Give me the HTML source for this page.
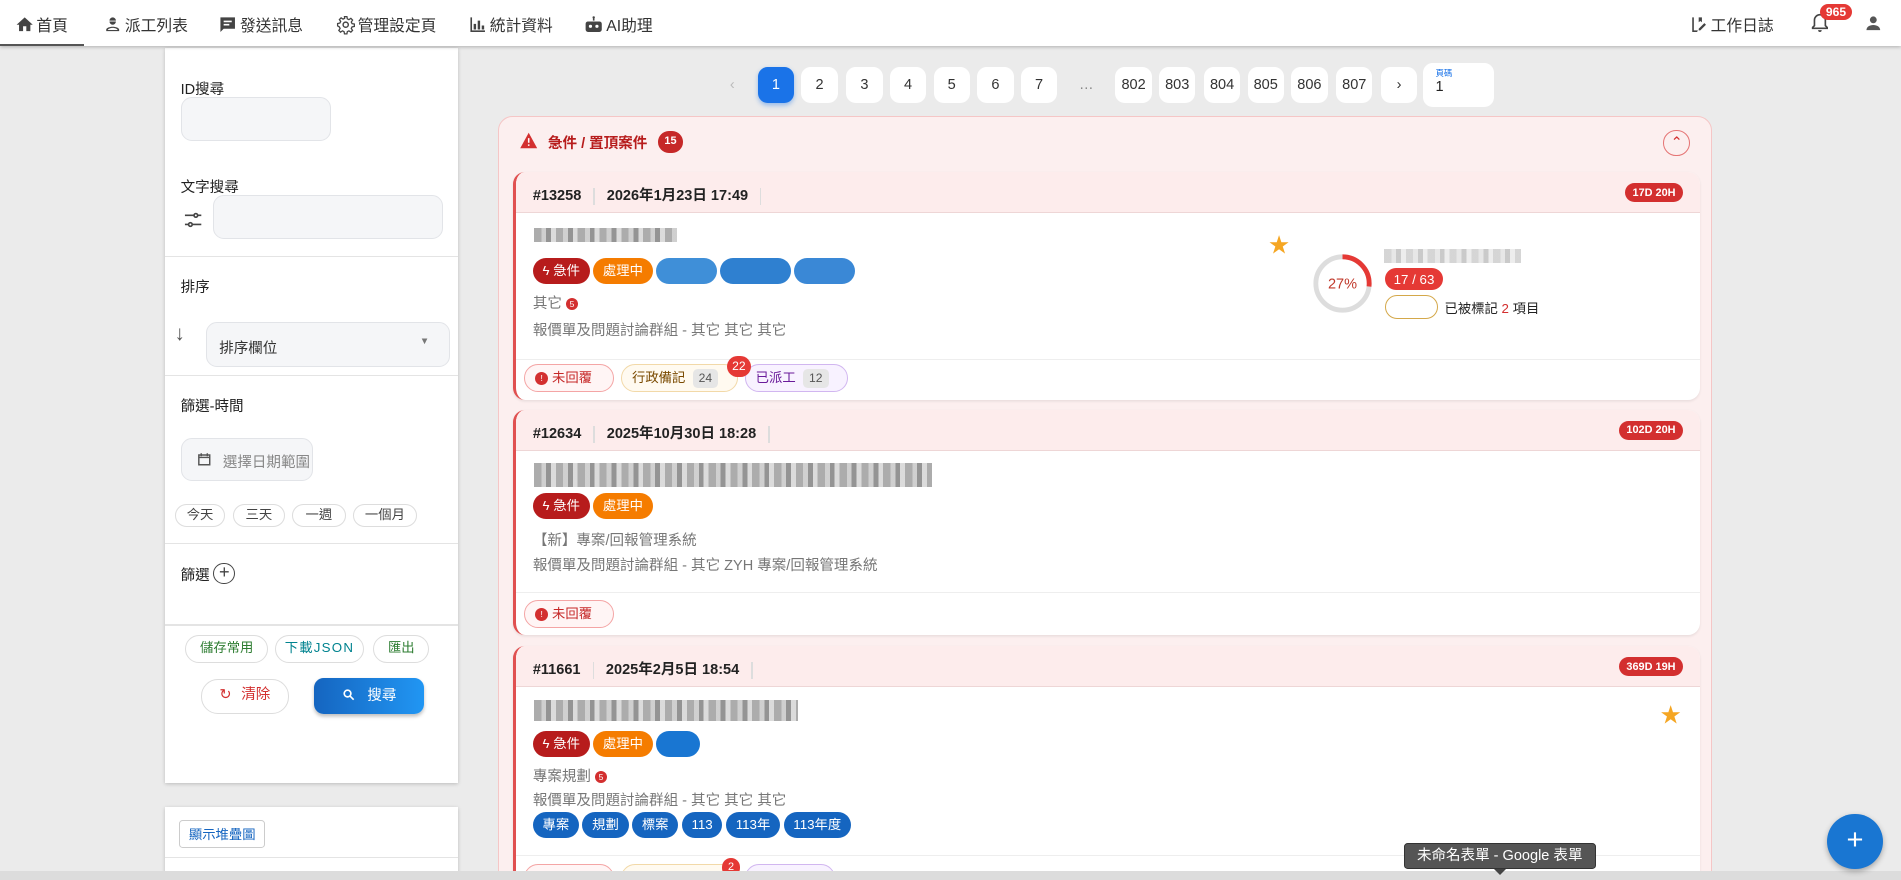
<!DOCTYPE html>
<html><head><meta charset="utf-8">
<style>
*{box-sizing:border-box;margin:0;padding:0}
html,body{width:1901px;height:880px;overflow:hidden;background:#ebebeb}
#w{zoom:1.2124;width:1568px;height:726px;position:relative;font-family:"Liberation Sans","Noto Sans CJK TC",sans-serif;color:#222;font-size:12px;overflow:hidden}
.a{position:absolute}
.top{left:0;top:0;width:1568px;height:38px;background:#fff;box-shadow:0 1px 3px rgba(0,0,0,.25);z-index:5}
.nav{top:11px;font-size:13px;color:#333;display:flex;align-items:center;gap:2px}
.nav svg{width:16px;height:16px;fill:#444}
.panel{background:#fff;box-shadow:0 1px 3px rgba(0,0,0,.2)}
.lbl{font-size:12px;color:#222}
.inp{background:#f5f6f8;border:1px solid #e2e4e8;border-radius:9px}
.hr{height:1px;background:#e4e4e4;left:0;width:242px}
.chip{border:1.5px solid #ddd;border-radius:12px;font-size:11px;text-align:center;height:19px;line-height:16px;color:#444}
.pg{width:30px;height:30px;background:#fff;border-radius:8px;text-align:center;line-height:30px;font-size:12px;top:55px;color:#333}
.card{left:423px;width:979px;background:#fff;border-radius:10px;border-left:3px solid #e05050;overflow:hidden;box-shadow:0 1px 2px rgba(0,0,0,.08)}
.ch{height:34px;background:#fdecec;border-bottom:1px solid #eed6d6;font-weight:bold;font-size:12px;padding:10px 0 0 14px;position:relative}
.ch span.sep{display:inline-block;width:1px;height:14px;background:#ddd;vertical-align:middle;margin:0 10px}
.days{position:absolute;right:14px;top:9px;background:#d32f2f;color:#fff;border-radius:9px;font-size:9px;padding:3px 6px;font-weight:bold}
.blur{background:repeating-linear-gradient(90deg,#888 0 6px,#bbb 6px 10px,#666 10px 14px,#ccc 14px 18px);opacity:.7;height:12px}
.tag{display:inline-block;vertical-align:top;border-radius:11px;color:#fff;font-size:11px;height:21px;line-height:21px;padding:0 8px;margin-right:3px}
.gr{color:#777;font-size:12px}
.pill{position:absolute;top:0;border-radius:12px;height:23px;line-height:21px;font-size:11px;padding:0 8px;border:1px solid;white-space:nowrap}
.cnt{display:inline-block;background:#e6e6e6;border-radius:4px;padding:0 5px;font-size:10px;color:#555;line-height:16px;margin-left:6px}
.dot{display:inline-block;width:10px;height:10px;border-radius:50%;background:#d32f2f;color:#fff;font-size:7px;text-align:center;line-height:10px;vertical-align:middle}
</style></head><body><div id="w">
<div class="a top">
 <div class="a nav" style="left:12px"><svg viewBox="0 0 24 24"><path d="M10 20v-6h4v6h5v-8h3L12 3 2 12h3v8z"/></svg>首頁</div>
 <div class="a" style="left:0;top:36px;width:69px;height:2px;background:#555"></div>
 <div class="a nav" style="left:85px"><svg viewBox="0 0 24 24"><path d="M12 3a4 4 0 0 1 4 4h-8a4 4 0 0 1 4-4zM8 8h8a4 4 0 0 1-8 0zM4 20v-2c0-2 4-3.5 8-3.5s8 1.5 8 3.5v2zm2-1.5h12c0-1-3-2.5-6-2.5s-6 1.5-6 2.5z"/></svg>派工列表</div>
 <div class="a nav" style="left:180px"><svg viewBox="0 0 24 24"><path d="M3 3h18v14H7l-4 4zm4 4v2h10V7zm0 4v2h7v-2z"/></svg>發送訊息</div>
 <div class="a nav" style="left:277px"><svg viewBox="0 0 24 24"><circle cx="12" cy="12" r="3.2" fill="none" stroke="#444" stroke-width="1.8"/><path d="M10.5 2h3l.5 2.8 2 1 2.4-1.6 2.1 2.1-1.6 2.4 1 2 2.8.5v3l-2.8.5-1 2 1.6 2.4-2.1 2.1-2.4-1.6-2 1-.5 2.8h-3l-.5-2.8-2-1-2.4 1.6-2.1-2.1 1.6-2.4-1-2L2 13.5v-3l2.8-.5 1-2-1.6-2.4 2.1-2.1 2.4 1.6 2-1z" fill="none" stroke="#444" stroke-width="1.6"/></svg>管理設定頁</div>
 <div class="a nav" style="left:386px"><svg viewBox="0 0 24 24"><path d="M3 3h2v16h16v2H3zm4 8h3v7H7zm5-4h3v11h-3zm5 6h3v5h-3z"/></svg>統計資料</div>
 <div class="a nav" style="left:482px"><svg viewBox="0 0 24 24"><circle cx="12" cy="3" r="1.5"/><path d="M11 4h2v3h-2zM5 8h14a3 3 0 0 1 3 3v7a3 3 0 0 1-3 3H5a3 3 0 0 1-3-3v-7a3 3 0 0 1 3-3zm3 4a2 2 0 1 0 0 4 2 2 0 0 0 0-4zm8 0a2 2 0 1 0 0 4 2 2 0 0 0 0-4z"/></svg>AI助理</div>
 <div class="a nav" style="left:1393px"><svg viewBox="0 0 24 24"><path d="M4 3h12v6l-2-1.5L12 9V3h-6v16h5l-1 2H4zM19 10l2 2-7 7h-2v-2z"/></svg>工作日誌</div>
 <svg class="a" style="left:1492px;top:10px" width="18" height="18" viewBox="0 0 24 24"><path d="M12 3a6 6 0 0 1 6 6v6l2 2v1H4v-1l2-2V9a6 6 0 0 1 6-6z" fill="none" stroke="#444" stroke-width="1.8"/><path d="M10 20h4a2 2 0 0 1-4 0z" fill="#444"/></svg>
 <div class="a" style="left:1501px;top:3px;background:#e53935;color:#fff;border-radius:9px;font-size:10px;padding:1px 5px;font-weight:bold">965</div>
 <svg class="a" style="left:1537px;top:11px" width="17" height="17" viewBox="0 0 24 24"><circle cx="12" cy="8" r="4" fill="#555"/><path d="M4 20c0-4 4-6 8-6s8 2 8 6z" fill="#555"/></svg>
</div>

<div class="a panel" style="left:136px;top:40px;width:242px;height:606px">
 <div class="a lbl" style="left:13px;top:24px">ID搜尋</div>
 <div class="a inp" style="left:13px;top:40px;width:124px;height:36px"></div>
 <div class="a lbl" style="left:13px;top:105px">文字搜尋</div>
 <svg class="a" style="left:13px;top:132px" width="20" height="18" viewBox="0 0 24 24"><path d="M3 7h10M17 7h4M3 17h4M11 17h10" stroke="#444" stroke-width="1.8" fill="none"/><circle cx="15" cy="7" r="2" stroke="#444" stroke-width="1.8" fill="none"/><circle cx="9" cy="17" r="2" stroke="#444" stroke-width="1.8" fill="none"/></svg>
 <div class="a inp" style="left:40px;top:121px;width:189px;height:36px"></div>
 <div class="a hr" style="top:171px"></div>
 <div class="a lbl" style="left:13px;top:188px">排序</div>
 <div class="a" style="left:8px;top:226px;font-size:17px;color:#555">↓</div>
 <div class="a inp" style="left:34px;top:226px;width:201px;height:37px;font-size:12px;padding:11px 0 0 10px;color:#333">排序欄位<span style="position:absolute;right:16px;top:10px;font-size:8px;color:#777">▼</span></div>
 <div class="a hr" style="top:269px"></div>
 <div class="a lbl" style="left:13px;top:286px">篩選-時間</div>
 <div class="a inp" style="left:13px;top:321px;width:109px;height:36px;padding:10px 0 0 34px;color:#888;font-size:12px">選擇日期範圍<svg class="a" style="left:13px;top:11px" width="12" height="12" viewBox="0 0 24 24"><path d="M3 5h18v16H3zM3 9h18M7 2v5M17 2v5" stroke="#555" stroke-width="2.4" fill="none"/></svg></div>
 <div class="a chip" style="left:8px;top:376px;width:42px">今天</div>
 <div class="a chip" style="left:56px;top:376px;width:43px">三天</div>
 <div class="a chip" style="left:105px;top:376px;width:44px">一週</div>
 <div class="a chip" style="left:155px;top:376px;width:53px">一個月</div>
 <div class="a hr" style="top:408px"></div>
 <div class="a lbl" style="left:13px;top:425px">篩選</div>
 <div class="a" style="left:40px;top:424px;width:18px;height:18px;border:1.5px solid #444;border-radius:50%;text-align:center;line-height:14px;font-size:15px;color:#444">+</div>
 <div class="a hr" style="top:475px"></div>
 <div class="a chip" style="left:17px;top:484px;width:68px;height:23px;line-height:20px;color:#2e7d32">儲存常用</div>
 <div class="a chip" style="left:91px;top:484px;width:73px;height:23px;line-height:20px;color:#00838f;letter-spacing:1px">下載JSON</div>
 <div class="a chip" style="left:172px;top:484px;width:46px;height:23px;line-height:20px;color:#2e7d32">匯出</div>
 <div class="a chip" style="left:30px;top:520px;width:72px;height:29px;line-height:26px;border-radius:14px;color:#d32f2f;font-size:12px"><span style="margin-right:8px">↻</span>清除</div>
 <div class="a" style="left:123px;top:519px;width:91px;height:30px;border-radius:8px;background:linear-gradient(90deg,#1565c0,#2196f3);color:#fff;text-align:center;line-height:30px;font-size:12px;box-shadow:0 2px 3px rgba(0,0,0,.25)"><svg width="11" height="11" viewBox="0 0 24 24" style="vertical-align:-1px;margin-right:10px"><circle cx="10" cy="10" r="6" stroke="#fff" stroke-width="3" fill="none"/><path d="M14.5 14.5L21 21" stroke="#fff" stroke-width="3"/></svg>搜尋</div>
</div>
<div class="a panel" style="left:136px;top:666px;width:242px;height:70px">
 <div class="a" style="left:12px;top:10px;border:1px solid #ccc;border-radius:3px;font-size:11px;padding:3px 7px;color:#1565c0">顯示堆疊圖</div>
 <div class="a hr" style="top:41px"></div>
</div>

<div class="a pg" style="left:589px;background:none;color:#bbb">‹</div>
<div class="a pg" style="left:625px;background:#1a73e8;color:#fff;box-shadow:0 2px 4px rgba(26,115,232,.4)">1</div>
<div class="a pg" style="left:661px">2</div>
<div class="a pg" style="left:698px">3</div>
<div class="a pg" style="left:734px">4</div>
<div class="a pg" style="left:770px">5</div>
<div class="a pg" style="left:806px">6</div>
<div class="a pg" style="left:842px">7</div>
<div class="a pg" style="left:881px;background:none;color:#888">…</div>
<div class="a pg" style="left:920px">802</div>
<div class="a pg" style="left:956px">803</div>
<div class="a pg" style="left:993px">804</div>
<div class="a pg" style="left:1029px">805</div>
<div class="a pg" style="left:1065px">806</div>
<div class="a pg" style="left:1102px">807</div>
<div class="a pg" style="left:1139px">›</div>
<div class="a" style="left:1174px;top:52px;width:58px;height:36px;background:#fff;border-radius:8px;padding:3px 0 0 10px"><div style="font-size:7px;color:#1a73e8">頁碼</div><div style="font-size:12px">1</div></div>

<div class="a" style="left:411px;top:96px;width:1001px;height:640px;background:#fcefef;border:1px solid #f5c6c6;border-radius:12px"></div>
<svg class="a" style="left:428px;top:109px" width="16" height="14" viewBox="0 0 24 22"><path d="M12 1L23 21H1z" fill="#d32f2f"/><path d="M11 8h2v6h-2zm0 8h2v2h-2z" fill="#fff"/></svg>
<div class="a" style="left:452px;top:109px;font-size:12px;font-weight:bold;color:#b71c1c">急件 / 置頂案件</div>
<div class="a" style="left:543px;top:108px;width:20px;height:18px;background:#c62828;color:#fff;border-radius:9px;font-size:9px;text-align:center;line-height:18px;font-weight:bold">15</div>
<div class="a" style="left:1372px;top:107px;width:22px;height:22px;border:1px solid #e57373;border-radius:50%;color:#d32f2f;text-align:center;line-height:20px;font-size:12px">⌃</div>

<div class="a card" style="top:142px;height:188px">
 <div class="ch">#13258<span class="sep"></span>2026年1月23日 17:49<span class="sep"></span><span class="days">17D 20H</span></div>
 <div class="a blur" style="left:15px;top:46px;width:118px"></div>
 <div class="a" style="left:14px;top:71px"><span class="tag" style="background:#b71c1c">ϟ 急件</span><span class="tag" style="background:#f57c00">處理中</span><span class="tag" style="background:#3f8fd8;width:50px"></span><span class="tag" style="background:#2f80d0;width:58px"></span><span class="tag" style="background:#3a88d6;width:50px"></span></div>
 <div class="a gr" style="left:14px;top:99px">其它 <span class="dot">5</span></div>
 <div class="a gr" style="left:14px;top:121px">報價單及問題討論群組 - 其它 其它 其它</div>
 <div class="a" style="left:621px;top:46px;color:#f5a623;font-size:17px">★</div>
 <svg class="a" style="left:656px;top:66px" width="52" height="52" viewBox="0 0 52 52"><circle cx="26" cy="26" r="22" fill="none" stroke="#ddd" stroke-width="4"/><circle cx="26" cy="26" r="22" fill="none" stroke="#e53935" stroke-width="4" stroke-dasharray="37 200" transform="rotate(-90 26 26)"/><text x="26" y="30" text-anchor="middle" font-size="12" fill="#c0392b" font-family="Liberation Sans">27%</text></svg>
 <div class="a blur" style="left:716px;top:63px;width:113px;opacity:.35"></div>
 <div class="a" style="left:717px;top:79px;background:#e53935;color:#fff;border-radius:10px;font-size:11px;padding:3px 7px">17 / 63</div>
 <div class="a" style="left:717px;top:101px;width:44px;height:20px;border:1px solid #d4a84a;border-radius:10px"></div>
 <div class="a" style="left:766px;top:104px;font-size:11px">已被標記 <span style="color:#d32f2f">2</span> 項目</div>
 <div class="a" style="left:0;top:154px;width:979px;height:1px;background:#eee"></div>
 <div class="a" style="left:0;top:158px;width:600px;height:24px">
  <span class="pill" style="left:7px;width:74px;border-color:#f4a5a5;color:#c62828;background:#fff5f5"><span class="dot" style="width:11px;height:11px">!</span> 未回覆</span>
  <span class="pill" style="left:87px;width:96px;border-color:#f2d9a8;color:#7a4a00;background:#fffaf0">行政備記<span class="cnt">24</span></span>
  <span class="pill" style="left:189px;width:85px;border-color:#d1b6f0;color:#6a1b9a;background:#f8f2ff">已派工<span class="cnt">12</span></span>
 </div>
 <div class="a" style="left:174px;top:152px;width:20px;height:17px;border-radius:9px;background:#e53935;color:#fff;font-size:10px;text-align:center;line-height:17px">22</div>
</div>

<div class="a card" style="top:338px;height:186px">
 <div class="ch">#12634<span class="sep"></span>2025年10月30日 18:28<span class="sep"></span><span class="days">102D 20H</span></div>
 <div class="a blur" style="left:15px;top:44px;width:328px;height:20px"></div>
 <div class="a" style="left:14px;top:69px"><span class="tag" style="background:#b71c1c">ϟ 急件</span><span class="tag" style="background:#f57c00">處理中</span></div>
 <div class="a gr" style="left:14px;top:98px">【新】專案/回報管理系統</div>
 <div class="a gr" style="left:14px;top:119px">報價單及問題討論群組 - 其它 ZYH 專案/回報管理系統</div>
 <div class="a" style="left:0;top:150px;width:979px;height:1px;background:#eee"></div>
 <div class="a" style="left:0;top:157px;width:300px;height:24px"><span class="pill" style="left:7px;width:74px;border-color:#f4a5a5;color:#c62828;background:#fff5f5"><span class="dot" style="width:11px;height:11px">!</span> 未回覆</span></div>
</div>

<div class="a card" style="top:533px;height:200px">
 <div class="ch">#11661<span class="sep"></span>2025年2月5日 18:54<span class="sep"></span><span class="days">369D 19H</span></div>
 <div class="a blur" style="left:15px;top:44px;width:218px;height:18px"></div>
 <div class="a" style="left:14px;top:70px"><span class="tag" style="background:#b71c1c">ϟ 急件</span><span class="tag" style="background:#f57c00">處理中</span><span class="tag" style="background:#1976d2;width:36px"></span></div>
 <div class="a" style="left:944px;top:43px;color:#f5a623;font-size:17px">★</div>
 <div class="a gr" style="left:14px;top:98px">專案規劃 <span class="dot">5</span></div>
 <div class="a gr" style="left:14px;top:118px">報價單及問題討論群組 - 其它 其它 其它</div>
 <div class="a" style="left:14px;top:137px"><span class="tag" style="background:#1565c0">專案</span><span class="tag" style="background:#1565c0">規劃</span><span class="tag" style="background:#1565c0">標案</span><span class="tag" style="background:#1565c0">113</span><span class="tag" style="background:#1565c0">113年</span><span class="tag" style="background:#1565c0">113年度</span></div>
 <div class="a" style="left:0;top:172px;width:979px;height:1px;background:#eee"></div>
 <div class="a" style="left:0;top:180px;width:400px;height:24px">
  <span class="pill" style="left:7px;width:74px;border-color:#f4a5a5;background:#fff5f5"></span>
  <span class="pill" style="left:87px;width:96px;border-color:#f2d9a8;background:#fffaf0"></span>
  <span class="pill" style="left:189px;width:74px;border-color:#d1b6f0;background:#f8f2ff"></span>
 </div>
 <div class="a" style="left:170px;top:175px;width:15px;height:15px;border-radius:8px;background:#e53935;color:#fff;font-size:9px;text-align:center;line-height:15px">2</div>
</div>

<div class="a" style="left:0;top:718px;width:1568px;height:8px;background:#dcdcdc"></div>
<div class="a" style="left:1158px;top:695px;width:158px;height:22px;background:#555;border:1px solid #333;border-radius:3px;color:#fff;font-size:12px;text-align:center;line-height:20px">未命名表單 - Google 表單</div>
<div class="a" style="left:1232px;top:717px;border:5px solid transparent;border-top-color:#444"></div>
<div class="a" style="left:1507px;top:671px;width:46px;height:46px;border-radius:50%;background:#1976d2;color:#fff;text-align:center;line-height:44px;font-size:24px;box-shadow:0 2px 5px rgba(0,0,0,.3)">+</div>
</div></body></html>
